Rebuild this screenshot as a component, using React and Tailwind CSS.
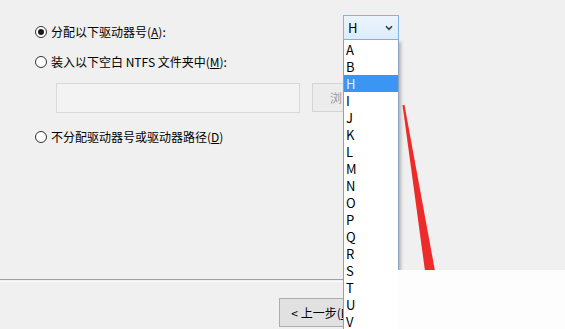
const letters = ["A", "B", "H", "I", "J", "K", "L", "M", "N", "O", "P", "Q", "R", "S", "T", "U", "V"]

function Radio({ checked }) {
  return (
    <span className="flex h-[12px] w-[12px] shrink-0 items-center justify-center rounded-full border border-[#333] bg-white">
      {checked && <span className="h-[6px] w-[6px] rounded-full bg-[#1a1a1a]" />}
    </span>
  )
}

export default function App() {
  return (
    <div
      className="relative h-[329px] w-[565px] overflow-hidden bg-[#f0f0f0] text-[12px] leading-none text-black"
      style={{ fontFamily: '"Noto Sans CJK SC", "Liberation Sans", sans-serif' }}
    >
      {/* Options area */}
      <div className="h-[279px] pl-[35px] pt-[15px]">
        <div className="flex">
          <label className="mt-[11px] flex h-[12px] w-[308px] items-center gap-[4px]">
            <Radio checked />
            <span>
              分配以下驱动器号(<span className="underline">A</span>):
            </span>
          </label>

          {/* Drive letter combo */}
          <div className="relative">
            <div className="flex h-[25px] w-[56px] items-center justify-between border border-[#7eb4ea] bg-gradient-to-b from-[#ecf4fc] to-[#dcecfc] pl-[4px] pr-[5px] text-[13px]">
              <span>H</span>
              <svg width="8" height="6" viewBox="0 0 8 6">
                <path d="M1 1.2 L4 4.3 L7 1.2" fill="none" stroke="#3c3c3c" strokeWidth="1.6" />
              </svg>
            </div>
            <div className="absolute left-0 top-[25px] z-10 h-[320px] w-[56px] border-l border-r border-[#8aa3c0] bg-white pt-[1px] shadow-[2px_2px_3px_rgba(0,0,0,0.25)]">
              {letters.map((l) => (
                <div
                  key={l}
                  className={`flex h-[17px] items-center pl-[2px] text-[13px] ${
                    l === "H" ? "bg-[#3a96f2] text-[#e6f2ff]" : ""
                  }`}
                >
                  {l}
                </div>
              ))}
            </div>
          </div>
        </div>

        <label className="mt-[16px] flex h-[12px] items-center gap-[4px]">
          <Radio />
          <span>
            装入以下空白 NTFS 文件夹中(<span className="underline">M</span>):
          </span>
        </label>

        <div className="mt-[15px] flex pl-[21px]">
          <div className="h-[30px] w-[244px] border border-[#d9d9d9] bg-[#f3f3f3]" />
          <div className="ml-[12px] flex h-[29px] w-[75px] items-center border border-[#d4d4d4] bg-[#ececec] pl-[17px] text-[#9a9a9a]">
            浏览(R)...
          </div>
        </div>

        <label className="mt-[18px] flex h-[12px] items-center gap-[4px]">
          <Radio />
          <span>
            不分配驱动器号或驱动器路径(<span className="underline">D</span>)
          </span>
        </label>
      </div>

      {/* Separator */}
      <div className="h-px bg-[#a0a0a0]" />
      <div className="mt-px h-px bg-[#fbfbfb]" />

      {/* Bottom buttons */}
      <div className="pl-[279px] pt-[16px]">
        <div className="flex h-[29px] w-[86px] items-center justify-center border border-[#adadad] bg-[#e1e1e1]">
          &lt; 上一步(<span className="underline">B</span>)
        </div>
      </div>

      {/* Red annotation arrow */}
      <svg className="pointer-events-none absolute left-0 top-0 z-20" width="565" height="329">
        <polygon points="402.5,105 404.5,105 435,271 425,271" fill="#ee2b2b" />
      </svg>

      {/* White patch */}
      <div className="absolute left-[398px] top-[270px] z-30 h-[59px] w-[167px] bg-[#fdfdfd]" />
    </div>
  )
}
